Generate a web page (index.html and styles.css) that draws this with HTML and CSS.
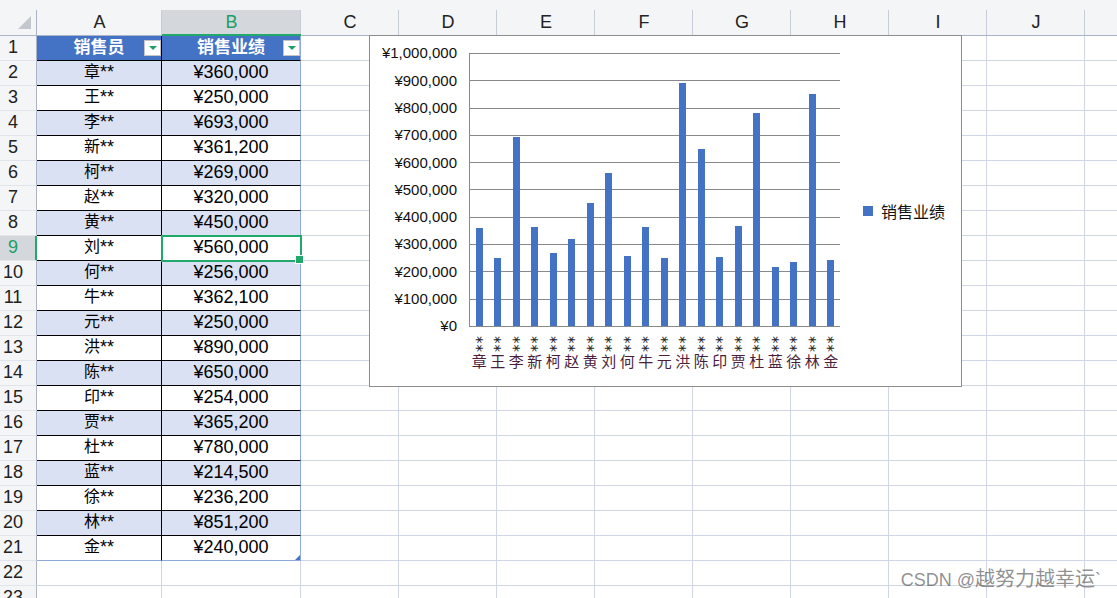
FILE: index.html
```html
<!DOCTYPE html>
<html lang="zh-CN">
<head>
  <meta charset="UTF-8">
  <meta name="viewport" content="width=device-width, initial-scale=1.0">
  <title>销售业绩</title>
  <link rel="stylesheet" href="styles.css">
</head>
<body>
  <div class="page">
    <div class="topbar"></div>
    <div class="sheet" id="sheet"></div>

    <div class="chart">
      <div class="chart-main">
        <div class="chart-body">
          <div class="yaxis" id="yaxis"></div>
          <div class="plot" id="plot"></div>
        </div>
        <div class="xaxis" id="xaxis"></div>
      </div>
      <div class="legend"><i></i>销售业绩</div>
    </div>

    <div class="watermark">CSDN @<span>越努力越幸运</span>`</div>
  </div>

  <script>
    var data = [
      ['章', 360000], ['王', 250000], ['李', 693000], ['新', 361200], ['柯', 269000],
      ['赵', 320000], ['黄', 450000], ['刘', 560000], ['何', 256000], ['牛', 362100],
      ['元', 250000], ['洪', 890000], ['陈', 650000], ['印', 254000], ['贾', 365200],
      ['杜', 780000], ['蓝', 214500], ['徐', 236200], ['林', 851200], ['金', 240000]
    ];
    // K 列只露出一点，不显示字母
    var cols = ['A', 'B', 'C', 'D', 'E', 'F', 'G', 'H', 'I', 'J', ''];

    function money(n) {
      return '¥' + String(n).replace(/\B(?=(\d{3})+(?!\d))/g, ',');
    }

    // 表格
    var sheet = document.getElementById('sheet');
    function add(cls, html) {
      var d = document.createElement('div');
      d.className = cls;
      if (html !== undefined) d.innerHTML = html;
      sheet.appendChild(d);
      return d;
    }

    add('corner');
    for (var i = 0; i < cols.length; i++) {
      add(i == 1 ? 'colhead sel' : 'colhead', cols[i]);
    }
    for (var r = 1; r <= 23; r++) {
      add(r == 9 ? 'rowhead sel' : 'rowhead', r);
      for (var c = 0; c < cols.length; c++) {
        if (r == 1 && c < 2) {
          var title = c == 0 ? '销售员' : '销售业绩';
          add('cell th' + (c == 1 ? ' num' : ''),
            '<span></span><span>' + title + '</span><span class="filter"></span>');
        } else if (r >= 2 && r <= 21 && c < 2) {
          var item = data[r - 2];
          var cls = 'cell td';
          if (r % 2 == 0) cls += ' band';
          if (c == 1) cls += ' num';
          if (r == 21) cls += ' last';
          if (r == 9 && c == 1) cls += ' cur';
          add(cls, c == 0 ? '<span class="cn">' + item[0] + '</span>**' : money(item[1]));
        } else {
          add('cell');
        }
      }
    }

    // 图表
    var yaxis = document.getElementById('yaxis');
    for (var v = 1000000; v >= 0; v -= 100000) {
      var lab = document.createElement('div');
      lab.className = 'ylabel';
      lab.textContent = money(v);
      yaxis.appendChild(lab);
    }

    var plot = document.getElementById('plot');
    var xaxis = document.getElementById('xaxis');
    data.forEach(function (item) {
      var slot = document.createElement('div');
      slot.className = 'slot';
      var bar = document.createElement('div');
      bar.className = 'bar';
      bar.style.height = (item[1] / 1000000 * 100) + '%';
      slot.appendChild(bar);
      plot.appendChild(slot);

      var xl = document.createElement('div');
      xl.className = 'xlabel';
      xl.innerHTML = '<span class="ch">' + item[0] + '</span><span class="st">**</span>';
      xaxis.appendChild(xl);
    });
  </script>
</body>
</html>
```

FILE: styles.css
```css
* {
  padding: 0;
  margin: 0;
  box-sizing: border-box;
}
body {
  background: #fff;
  overflow: hidden;
  font-family: "Liberation Sans", "Noto Sans CJK SC", sans-serif;
  color: #000;
}
.page {
  position: relative;
  width: 1117px;
  height: 598px;
  overflow: hidden;
}
.topbar {
  height: 10px;
  background: #f4f5f7;
}

/* 工作表 */
.sheet {
  display: grid;
  grid-template-columns: 37px 125px 139px repeat(9, 98px);
  grid-template-rows: 26px;
  grid-auto-rows: 25px;
}
.corner {
  background: #f4f5f7;
  border-right: 1px solid #abb3c6;
  border-bottom: 1px solid #abb3c6;
  display: flex;
  align-items: flex-end;
  justify-content: flex-end;
  padding: 0 5px 6px 0;
}
.corner::before {
  content: '';
  width: 0;
  height: 0;
  border-left: 13px solid transparent;
  border-bottom: 13px solid #c3c7ce;
}
.colhead {
  background: linear-gradient(#c6ccd8, #c6ccd8) no-repeat right top / 1px 100%, #f4f5f7;
  border-bottom: 1px solid #abb3c6;
  font-size: 18px;
  line-height: 25px;
  color: #222;
  text-align: center;
}
.colhead.sel {
  background-color: #d4d7dc;
  color: #1e9e63;
  border-bottom-color: #21a86b;
  box-shadow: inset 0 -1px #21a86b;
}
.rowhead {
  background: #f4f5f7;
  border-right: 1px solid #abb3c6;
  border-bottom: 1px solid #e1e4ea;
  font-size: 18px;
  line-height: 20px;
  color: #222;
  display: flex;
  align-items: center;
  justify-content: center;
  padding: 0 10px 2px 0;
}
.rowhead.sel {
  background: #d4d7dc;
  color: #1e9e63;
  border-right-color: #21a86b;
  box-shadow: inset -1px 0 #21a86b;
}
.cell {
  border-right: 1px solid #d0d6e3;
  border-bottom: 1px solid #d0d6e3;
  font-size: 18px;
  line-height: 20px;
  display: flex;
  align-items: center;
  justify-content: center;
  padding-bottom: 2px;
  white-space: nowrap;
}
.cell .cn {
  font-size: 16px;
}
.th {
  display: grid;
  grid-template-columns: 18px 1fr 18px;
  background: #4472c4;
  color: #fff;
  font-size: 17px;
  font-weight: 700;
  text-align: center;
  border-right-color: #000;
  border-bottom-color: #000;
  padding-bottom: 0;
}
.th .filter {
  justify-self: end;
  width: 17px;
  height: 16px;
  background: #fff;
  border: 1px solid #c4c4c4;
  display: flex;
  align-items: center;
  justify-content: center;
}
.th .filter::before {
  content: '';
  width: 0;
  height: 0;
  border-top: 4px solid #1f9d63;
  border-left: 4px solid transparent;
  border-right: 4px solid transparent;
}
.td {
  border-right-color: #000;
  border-bottom-color: #000;
}
.td.band {
  background: #d9e1f2;
}
.th.num,
.td.num {
  border-right-color: #8ea9db;
}
.td.last {
  border-bottom-color: #8ea9db;
  position: relative;
}
.td.last.num::after {
  content: '';
  position: absolute;
  right: 0;
  bottom: 0;
  width: 0;
  height: 0;
  border-left: 5px solid transparent;
  border-bottom: 5px solid #4472c4;
}
.td.cur {
  position: relative;
  z-index: 1;
  outline: 2px solid #21a86b;
  outline-offset: -1px;
}
.td.cur::after {
  content: '';
  position: absolute;
  right: -4px;
  bottom: -4px;
  width: 7px;
  height: 7px;
  background: #21a86b;
  border: 1px solid #fff;
}

/* 图表 */
.chart {
  position: absolute;
  left: 369px;
  top: 35px;
  width: 593px;
  height: 352px;
  border: 1px solid #8d8d8d;
  background: #fff;
  display: flex;
  z-index: 2;
}
.chart-main {
  padding-top: 17px;
}
.chart-body {
  display: flex;
  align-items: flex-start;
}
.yaxis {
  width: 87px;
  margin: -13.65px 12px -13.65px 0;
  display: flex;
  flex-direction: column;
}
.ylabel {
  height: 27.3px;
  line-height: 27.3px;
  font-size: 15px;
  text-align: right;
  color: #111;
}
.plot {
  width: 371px;
  height: 274px;
  border-left: 1px solid #898989;
  border-bottom: 1px solid #898989;
  background: repeating-linear-gradient(to bottom, #898989 0, #898989 1px, transparent 1px, transparent 27.3px);
  display: flex;
}
.slot {
  flex: 1;
  display: flex;
  align-items: flex-end;
  justify-content: center;
}
.bar {
  width: 7px;
  background: #4472c4;
}
.xaxis {
  display: flex;
  width: 370px;
  margin: 9px 0 0 100px;
}
.xlabel {
  flex: 1;
  min-width: 0;
  display: flex;
  flex-direction: column-reverse;
  align-items: center;
  font-size: 15px;
  color: #4b1e3c;
}
.xlabel .ch {
  line-height: 17px;
  height: 17px;
}
.xlabel .st {
  writing-mode: vertical-rl;
  font-family: "DejaVu Sans", sans-serif;
  line-height: 12px;
  letter-spacing: 1px;
  margin-right: 7px;
  color: #222;
}
.legend {
  align-self: center;
  margin-left: 23px;
  display: flex;
  align-items: center;
  gap: 8px;
  font-family: "Noto Sans CJK SC", sans-serif;
  font-size: 16px;
  color: #111;
}
.legend i {
  width: 10px;
  height: 10px;
  background: #4472c4;
}

.watermark {
  position: absolute;
  right: 16px;
  top: 567px;
  font-size: 18px;
  line-height: 22px;
  color: rgba(70, 70, 70, 0.6);
  white-space: nowrap;
  z-index: 3;
}
.watermark span {
  font-family: "Noto Sans CJK SC", sans-serif;
  font-size: 20px;
}
```
